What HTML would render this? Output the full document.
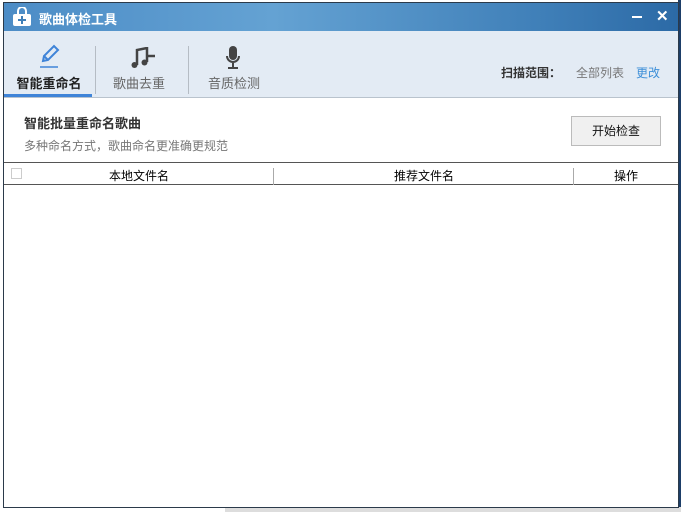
<!DOCTYPE html>
<html><head><meta charset="utf-8"><style>
*{margin:0;padding:0;box-sizing:border-box}
body{width:681px;height:512px;overflow:hidden;background:#fff;font-family:"Liberation Sans","Noto Sans CJK SC",sans-serif;position:relative}
.bgl{position:absolute;left:0;top:0;width:3px;height:512px;background:#fff}
.bgr{position:absolute;left:678px;top:0;width:3px;height:512px;background:#1d3e68}
.bgb{position:absolute;left:225px;top:507px;width:456px;height:5px;background:#ddd}
.win{position:absolute;left:3px;top:2px;width:676px;height:506px;border:1px solid #2b3a4a;background:#fff;overflow:hidden}
.title{position:absolute;left:0;top:0;width:674px;height:28px;background:linear-gradient(90deg,#4c8cc6,#64a2d3 40%,#3f7fb8 80%,#2c6aa6);color:#fff;font-size:13px;font-weight:bold}
.title span{position:absolute;left:35px;top:6px}
.tabs{position:absolute;left:0;top:28px;width:674px;height:67px;background:#e3ebf4;border-bottom:1px solid #b9c3cd}
.tab{position:absolute;top:42px;font-size:13px;color:#666;width:90px;text-align:center}
.sep{position:absolute;top:15px;width:1px;height:48px;background:#b5bcc4}
.ul{position:absolute;left:0;top:63px;width:88px;height:3px;background:#3f84d8}
.row{position:absolute;top:159px;left:0;width:674px;height:23px;border-top:1px solid #555;border-bottom:1px solid #555;font-size:12px;color:#000}
</style></head><body>
<div class="bgl"></div><div class="bgr"></div><div class="bgb"></div>
<div class="win">
 <div class="title">
  <svg style="position:absolute;left:8px;top:4px" width="20" height="20" viewBox="0 0 20 20"><path d="M6 7V4a4 4 0 0 1 8 0v3" fill="none" stroke="#fff" stroke-width="2"/><rect x="1" y="7" width="18" height="12" rx="2" fill="#fff"/><path d="M10 9v8M6 13h8" stroke="#3f7fb8" stroke-width="2"/></svg>
  <span>歌曲体检工具</span>
  <div style="position:absolute;left:628px;top:13px;width:10px;height:2px;background:#fff"></div>
  <div style="position:absolute;left:652px;top:4px;font-size:15px">✕</div>
 </div>
 <div class="tabs">
  <svg style="position:absolute;left:34px;top:13px" width="22" height="24" viewBox="0 0 22 24"><path d="M5 17l1-5L16 2l4 4-10 10z M6 12l4 4" fill="none" stroke="#3f84d8" stroke-width="2"/><path d="M2 23h18" stroke="#3f84d8" stroke-width="1.5"/></svg>
  <div class="tab" style="left:0;color:#222;font-weight:bold">智能重命名</div>
  <div class="ul"></div>
  <div class="sep" style="left:91px"></div>
  <svg style="position:absolute;left:126px;top:16px" width="26" height="22" viewBox="0 0 26 22"><path d="M7 18V3l10-2v14" fill="none" stroke="#444" stroke-width="2.5"/><circle cx="4.5" cy="18" r="3" fill="#444"/><circle cx="14.5" cy="15.5" r="3" fill="#444"/><path d="M18 9h7" stroke="#444" stroke-width="2.5"/></svg>
  <div class="tab" style="left:90px">歌曲去重</div>
  <div class="sep" style="left:184px"></div>
  <svg style="position:absolute;left:221px;top:14px" width="16" height="26" viewBox="0 0 16 26"><rect x="4" y="1" width="8" height="14" rx="4" fill="#444"/><path d="M2 11a6 6 0 0 0 12 0M8 17v5M3 23h10" fill="none" stroke="#444" stroke-width="2"/></svg>
  <div class="tab" style="left:185px">音质检测</div>
  <div style="position:absolute;left:497px;top:33px;font-size:12px;font-weight:bold;color:#333">扫描范围：</div>
  <div style="position:absolute;left:572px;top:33px;font-size:12px;color:#777">全部列表</div>
  <div style="position:absolute;left:632px;top:33px;font-size:12px;color:#3d8fd8">更改</div>
 </div>
 <div style="position:absolute;left:20px;top:110px;font-size:13px;font-weight:bold;color:#333">智能批量重命名歌曲</div>
 <div style="position:absolute;left:20px;top:134px;font-size:12px;color:#777">多种命名方式，歌曲命名更准确更规范</div>
 <div style="position:absolute;left:567px;top:113px;width:90px;height:30px;border:1px solid #bbb;background:#f0f0f0;font-size:12px;text-align:center;line-height:28px;color:#111">开始检查</div>
 <div class="row">
  <div style="position:absolute;left:7px;top:5px;width:11px;height:11px;border:1px solid #ccc"></div>
  <div style="position:absolute;left:0;width:270px;top:4px;text-align:center">本地文件名</div>
  <div style="position:absolute;left:269px;top:5px;width:1px;height:17px;background:#aaa"></div>
  <div style="position:absolute;left:270px;width:300px;top:4px;text-align:center">推荐文件名</div>
  <div style="position:absolute;left:569px;top:5px;width:1px;height:17px;background:#aaa"></div>
  <div style="position:absolute;left:570px;width:104px;top:4px;text-align:center">操作</div>
 </div>
</div>
</body></html>
